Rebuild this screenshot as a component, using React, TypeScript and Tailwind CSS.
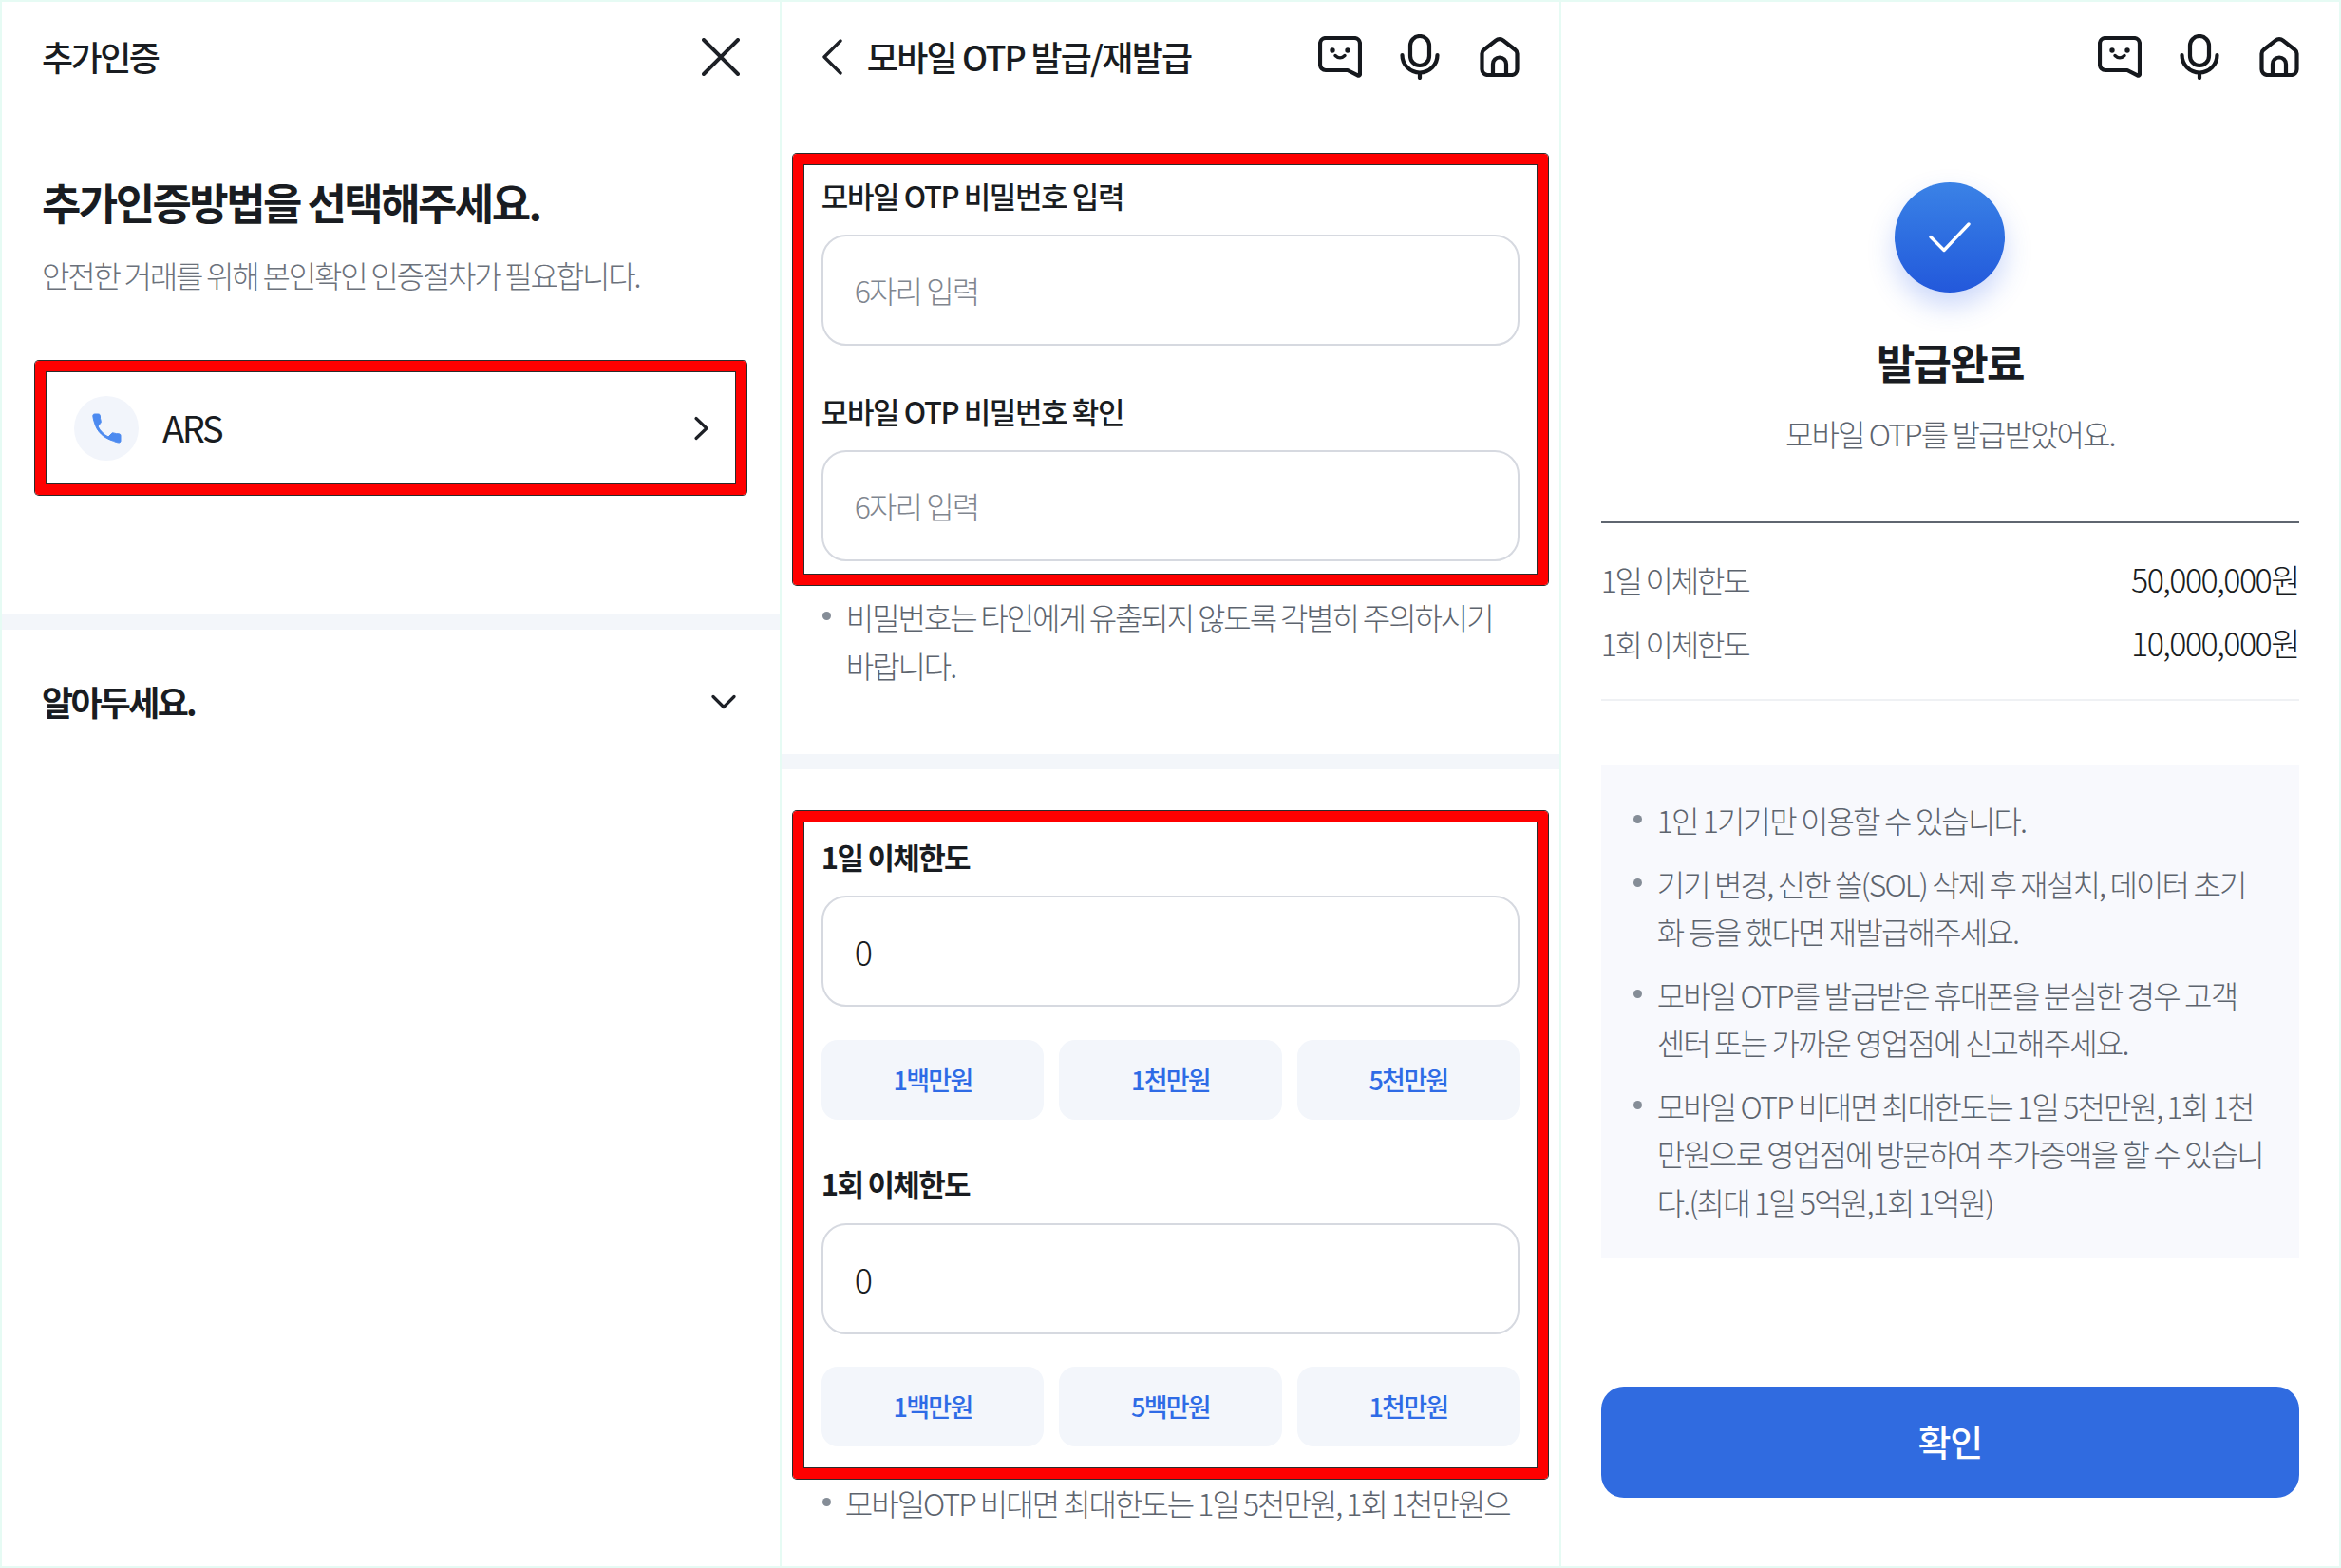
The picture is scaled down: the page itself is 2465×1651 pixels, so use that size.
import React from 'react';

function ChatIcon() {
  return (
    <svg width="46" height="44" viewBox="0 0 46 44" fill="none" stroke="#15181d" strokeWidth="4.200" strokeLinecap="round" strokeLinejoin="round">
      <path d="M8 2H38a6 6 0 0 1 6 6V40a1.600 1.600 0 0 1-2.400 1.400L31 36H8a6 6 0 0 1-6-6V8a6 6 0 0 1 6-6z" />
      <circle cx="15" cy="15" r="2.700" fill="#15181d" stroke="none" />
      <circle cx="31" cy="15" r="2.700" fill="#15181d" stroke="none" />
      <path d="M18 20.500c3 3 7 3 10 0" strokeWidth="3.400" />
    </svg>
  );
}

function MicIcon() {
  return (
    <svg width="42" height="48" viewBox="0 0 42 48" fill="none" stroke="#15181d" strokeWidth="4.200" strokeLinecap="round">
      <rect x="11" y="2" width="20" height="31" rx="10" />
      <path d="M2.500 22a18.500 18.500 0 0 0 37 0" />
      <path d="M21 41v5" />
    </svg>
  );
}

function HomeIcon() {
  return (
    <svg width="42" height="42" viewBox="0 0 42 42" fill="none" stroke="#15181d" strokeWidth="4.200" strokeLinecap="round" strokeLinejoin="round">
      <path d="M4.500 13.500L17 3.600a6.400 6.400 0 0 1 8 0L37.500 13.500a5 5 0 0 1 2 4V34a6 6 0 0 1-6 6H8.500a6 6 0 0 1-6-6V17.500a5 5 0 0 1 2-4z" />
      <path d="M14 40V28.500a7 7 0 0 1 14 0V40" />
    </svg>
  );
}

function HeaderIcons() {
  return (
    <div className="flex items-center">
      <ChatIcon />
      <div className="ml-[40px] mr-[42px] flex">
        <MicIcon />
      </div>
      <HomeIcon />
    </div>
  );
}

function Mark({ className, children }: { className?: string; children: React.ReactNode }) {
  return (
    <div className={`rounded-[4px] border-[11px] border-[#ff0000] shadow-[0_0_0_1px_#2b2b2b,inset_0_0_0_1px_#2b2b2b] ${className ?? ''}`}>
      {children}
    </div>
  );
}

function Field({ text, muted }: { text: string; muted?: boolean }) {
  return (
    <div className={`flex h-[117px] items-center rounded-[26px] border-2 border-[#d6d9e0] bg-white pl-[33px] font-light ${muted ? 'text-[32px] tracking-[-0.06em] text-[#80868f]' : 'text-[36px] text-[#191c21]'}`}>
      <span className="-mt-[2px]">{text}</span>
    </div>
  );
}

function Chips({ items }: { items: string[] }) {
  return (
    <div className="grid grid-cols-3 gap-[16px]">
      {items.map((t, i) => (
        <div key={i} className="flex h-[84px] items-center justify-center rounded-[17px] bg-[#f3f6fb] text-[27px] font-medium tracking-[-0.065em] text-[#2e6be6]">
          {t}
        </div>
      ))}
    </div>
  );
}

function Bullet({ children, className }: { children: React.ReactNode; className?: string }) {
  return (
    <div className={`relative text-[32px] font-light leading-[50.5px] text-[#5d646e] ${className ?? ''}`}>
      <span className="absolute top-[20px] h-[9px] w-[9px] rounded-full bg-[#858d97] [left:var(--dot)]" />
      {children}
    </div>
  );
}

function PanelOne() {
  return (
    <section className="flex-1 bg-white">
      <header className="flex h-[116px] items-center justify-between px-[42px]">
        <span className="-mt-[2px] text-[36px] font-medium tracking-[-0.07em] text-[#191c21]">추가인증</span>
        <svg width="40" height="40" viewBox="0 0 40 40" fill="none" stroke="#1d2026" strokeWidth="4" strokeLinecap="round">
          <path d="M2 2L38 38M38 2L2 38" />
        </svg>
      </header>
      <h1 className="mt-[65px] px-[42px] text-[45px] font-semibold leading-[60px] tracking-[-0.057em] text-[#191c21]">추가인증방법을 선택해주세요.</h1>
      <p className="mt-[24px] px-[42px] text-[32px] font-light leading-[44px] tracking-[-0.069em] text-[#6b717b]">안전한 거래를 위해 본인확인 인증절차가 필요합니다.</p>
      <div className="mt-[69px] px-[35px]">
        <Mark className="flex h-[141px] items-center justify-between pl-[30px] pr-[28px]">
          <div className="flex items-center gap-[25px]">
            <div className="flex h-[68px] w-[68px] items-center justify-center rounded-full bg-[#f2f5fb]">
              <svg width="40" height="40" viewBox="0 0 24 24" fill="#4c8af0" stroke="#4c8af0" strokeWidth="0.600" strokeLinejoin="round">
                <path d="M6.620 10.790c1.440 2.830 3.760 5.140 6.590 6.590l2.200-2.200c.27-.27.67-.36 1.020-.24 1.120.37 2.330.57 3.570.57.55 0 1 .45 1 1V20c0 .55-.45 1-1 1-1 0-2.500-.5-3.500-1C10 18 6 14 4.500 8.500 4 7 3.500 5 3.500 4c0-.55.45-1 1-1h2.500c.55 0 1 .45 1 1 0 1.250.2 2.450.57 3.570.11.35.03.74-.25 1.020l-1.700 2.200z" />
              </svg>
            </div>
            <span className="-mt-[3px] text-[38px] font-normal tracking-[-0.06em] text-[#191c21]">ARS</span>
          </div>
          <svg width="18" height="26" viewBox="0 0 18 26" fill="none" stroke="#1d2026" strokeWidth="3.200" strokeLinecap="round" strokeLinejoin="round">
            <path d="M4 2.500L15 13 4 23.500" />
          </svg>
        </Mark>
      </div>
      <div className="mt-[125px] h-[17px] bg-[#f3f6fa]" />
      <div className="mt-[46px] flex h-[60px] items-center justify-between pl-[42px] pr-[46px]">
        <span className="-mt-[3px] text-[36px] font-semibold tracking-[-0.075em] text-[#191c21]">알아두세요.</span>
        <svg width="26" height="16" viewBox="0 0 26 16" fill="none" stroke="#1d2026" strokeWidth="3.200" strokeLinecap="round" strokeLinejoin="round">
          <path d="M2 2.500L13 13.500 24 2.500" />
        </svg>
      </div>
    </section>
  );
}

function PanelTwo() {
  return (
    <section className="flex-1 overflow-hidden bg-white">
      <header className="flex h-[116px] items-center justify-between px-[42px]">
        <div className="flex items-center gap-[26px]">
          <svg width="22" height="38" viewBox="0 0 22 38" fill="none" stroke="#1d2026" strokeWidth="3.400" strokeLinecap="round" strokeLinejoin="round">
            <path d="M20 2L3 19 20 36" />
          </svg>
          <span className="-mt-[2px] text-[36px] font-medium tracking-[-0.05em] text-[#191c21]">모바일 OTP 발급/재발급</span>
        </div>
        <HeaderIcons />
      </header>
      <div className="mt-[44px] px-[12px]">
        <Mark className="pb-[14px] pl-[19px] pr-[19px] pt-[11px]">
          <div className="text-[31px] font-medium leading-[44px] tracking-[-0.045em] text-[#191c21]">모바일 OTP 비밀번호 입력</div>
          <div className="mt-[19px]"><Field text="6자리 입력" muted /></div>
          <div className="mt-[47px] text-[31px] font-medium leading-[44px] tracking-[-0.045em] text-[#191c21]">모바일 OTP 비밀번호 확인</div>
          <div className="mt-[19px]"><Field text="6자리 입력" muted /></div>
        </Mark>
      </div>
      <Bullet className="mt-[8px] pl-[68px] tracking-[-0.066em] [--dot:43px]">
        비밀번호는 타인에게 유출되지 않도록 각별히 주의하시기<br />바랍니다.
      </Bullet>
      <div className="mt-[69px] h-[16px] bg-[#f3f6fa]" />
      <div className="mt-[44px] px-[12px]">
        <Mark className="pb-[23px] pl-[19px] pr-[19px] pt-[15px]">
          <div className="text-[31px] font-semibold leading-[44px] tracking-[-0.055em] text-[#191c21]">1일 이체한도</div>
          <div className="mt-[19px]"><Field text="0" /></div>
          <div className="mt-[35px]"><Chips items={['1백만원', '1천만원', '5천만원']} /></div>
          <div className="mt-[45px] text-[31px] font-semibold leading-[44px] tracking-[-0.055em] text-[#191c21]">1회 이체한도</div>
          <div className="mt-[20px]"><Field text="0" /></div>
          <div className="mt-[34px]"><Chips items={['1백만원', '5백만원', '1천만원']} /></div>
        </Mark>
      </div>
      <Bullet className="mt-0 whitespace-nowrap pl-[67px] tracking-[-0.063em] [--dot:43px]">모바일OTP 비대면 최대한도는 1일 5천만원, 1회 1천만원으</Bullet>
    </section>
  );
}

function PanelThree() {
  return (
    <section className="flex-1 bg-white">
      <header className="flex h-[116px] items-center justify-end px-[42px]">
        <HeaderIcons />
      </header>
      <div className="mt-[74px] flex justify-center">
        <div className="flex h-[116px] w-[116px] items-center justify-center rounded-full bg-gradient-to-b from-[#3b82e6] to-[#2358db] shadow-[0_14px_28px_rgba(50,100,235,0.25)]">
          <svg width="44" height="32" viewBox="0 0 44 32" fill="none" stroke="#ffffff" strokeWidth="3.400" strokeLinecap="round" strokeLinejoin="round">
            <path d="M2 15.500L16 29.500 42 2" />
          </svg>
        </div>
      </div>
      <div className="mt-[45px] text-center text-[44px] font-semibold leading-[56px] tracking-[-0.04em] text-[#191c21]">발급완료</div>
      <div className="mt-[25px] text-center text-[32px] font-light leading-[44px] tracking-[-0.06em] text-[#5d646e]">모바일 OTP를 발급받았어요.</div>
      <div className="mx-[42px] mt-[71px] h-[2px] bg-[#5f6670]" />
      <div className="mx-[42px] mt-[37px] flex items-center justify-between font-light leading-[44px]">
        <span className="text-[32px] tracking-[-0.07em] text-[#5d646e]">1일 이체한도</span>
        <span className="text-[34px] tracking-[-0.045em] text-[#191c21]">50,000,000원</span>
      </div>
      <div className="mx-[42px] mt-[23px] flex items-center justify-between font-light leading-[44px]">
        <span className="text-[32px] tracking-[-0.07em] text-[#5d646e]">1회 이체한도</span>
        <span className="text-[34px] tracking-[-0.045em] text-[#191c21]">10,000,000원</span>
      </div>
      <div className="mx-[42px] mt-[37px] h-[2px] bg-[#eff1f4]" />
      <div className="mx-[42px] mt-[67px] flex flex-col gap-[16px] bg-[#f8f9fd] pb-[35px] pt-[33px]">
        <Bullet className="pl-[59px] tracking-[-0.058em] [--dot:34px]">1인 1기기만 이용할 수 있습니다.</Bullet>
        <Bullet className="pl-[59px] tracking-[-0.058em] [--dot:34px]">기기 변경, 신한 쏠(SOL) 삭제 후 재설치, 데이터 초기<br />화 등을 했다면 재발급해주세요.</Bullet>
        <Bullet className="pl-[59px] tracking-[-0.058em] [--dot:34px]">모바일 OTP를 발급받은 휴대폰을 분실한 경우 고객<br />센터 또는 가까운 영업점에 신고해주세요.</Bullet>
        <Bullet className="pl-[59px] tracking-[-0.058em] [--dot:34px]">모바일 OTP 비대면 최대한도는 1일 5천만원, 1회 1천<br />만원으로 영업점에 방문하여 추가증액을 할 수 있습니<br />다.(최대 1일 5억원,1회 1억원)</Bullet>
      </div>
      <div className="mx-[42px] mt-[135px] flex h-[117px] items-center justify-center rounded-[24px] bg-[#306be0] pb-[4px] text-[38px] font-medium tracking-[-0.03em] text-white">
        확인
      </div>
    </section>
  );
}

export default function App() {
  return (
    <div className="flex h-[1651px] w-[2465px] gap-[1.500px] overflow-hidden bg-[#e6fbf4] p-[2px] font-['Noto_Sans_CJK_KR',sans-serif]">
      <PanelOne />
      <PanelTwo />
      <PanelThree />
    </div>
  );
}
